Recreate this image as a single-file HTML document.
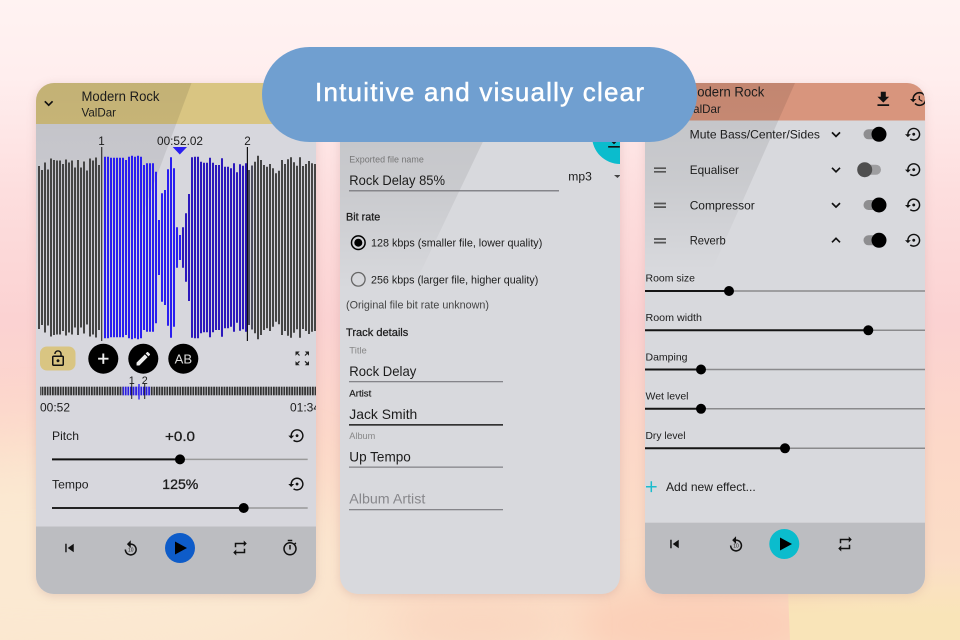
<!DOCTYPE html>
<html><head><meta charset="utf-8"><style>
html,body{margin:0;padding:0;width:960px;height:640px;overflow:hidden;background:#fbdcd6}
svg{display:block;position:absolute;left:0;top:0}
text{font-family:"Liberation Sans",sans-serif;fill:#1c1c1c}
</style></head><body>
<svg width="960" height="640" viewBox="0 0 960 640" xmlns="http://www.w3.org/2000/svg">
<defs>
<linearGradient id="bg" x1="0" y1="0" x2="0" y2="1">
<stop offset="0" stop-color="#fff3f2"/><stop offset=".12" stop-color="#ffeeee"/><stop offset=".3" stop-color="#fddede"/><stop offset=".5" stop-color="#fbd2d2"/><stop offset=".7" stop-color="#fcd8c8"/><stop offset=".85" stop-color="#fbdcc6"/><stop offset="1" stop-color="#fbe2ca"/>
</linearGradient>
<linearGradient id="fade" x1="0" y1="0" x2="0" y2="1">
<stop offset="0" stop-color="#000" stop-opacity=".1"/><stop offset=".5" stop-color="#000" stop-opacity=".07"/><stop offset="1" stop-color="#000" stop-opacity="0"/>
</linearGradient>
<linearGradient id="yel" gradientUnits="userSpaceOnUse" x1="0" y1="560" x2="0" y2="615">
<stop offset="0" stop-color="#f9e4b8" stop-opacity="0"/><stop offset="1" stop-color="#f9e4b8"/>
</linearGradient>
<filter id="sh" x="-10%" y="-10%" width="120%" height="120%"><feGaussianBlur stdDeviation="5"/></filter>
<filter id="b40" x="-50%" y="-50%" width="200%" height="200%"><feGaussianBlur stdDeviation="35"/></filter>
<filter id="b20" x="-50%" y="-50%" width="200%" height="200%"><feGaussianBlur stdDeviation="20"/></filter>
<clipPath id="c1"><rect x="36" y="83" width="280" height="511" rx="18"/></clipPath>
<clipPath id="c2"><rect x="340" y="83" width="280" height="511" rx="18"/></clipPath>
<clipPath id="c3"><rect x="645" y="83" width="280" height="511" rx="18"/></clipPath>
<symbol id="reset" viewBox="0 0 24 24"><path d="M14 12c0-1.100-.9-2-2-2s-2 .9-2 2 .9 2 2 2 2-.9 2-2zm-2-9c-4.970 0-9 4.030-9 9H0l4 4 4-4H5c0-3.870 3.130-7 7-7s7 3.130 7 7-3.130 7-7 7c-1.510 0-2.910-.49-4.060-1.300l-1.420 1.440C8.040 20.300 9.940 21 12 21c4.970 0 9-4.030 9-9s-4.030-9-9-9z"/></symbol>
<symbol id="hist" viewBox="0 0 24 24"><path d="M13 3c-4.970 0-9 4.030-9 9H1l3.890 3.890.07.14L9 12H6c0-3.870 3.130-7 7-7s7 3.130 7 7-3.130 7-7 7c-1.930 0-3.680-.79-4.940-2.060l-1.420 1.420C8.270 19.990 10.510 21 13 21c4.970 0 9-4.030 9-9s-4.030-9-9-9zm-1 5v5l4.280 2.540.72-1.210-3.500-2.080V8H12z"/></symbol>
<symbol id="dl" viewBox="0 0 24 24"><path d="M19 9h-4V3H9v6H5l7 7 7-7zM5 18v2h14v-2H5z"/></symbol>
<symbol id="prev" viewBox="0 0 24 24"><path d="M6 6h2v12H6zm3.500 6l8.500 6V6z"/></symbol>
<symbol id="rep" viewBox="0 0 24 24"><path d="M7 7h10v3l4-4-4-4v3H5v6h2V7zm10 10H7v-3l-4 4 4 4v-3h12v-6h-2v4z"/></symbol>
<symbol id="timer" viewBox="0 0 24 24"><path d="M15 1H9v2h6V1zm-4 13h2V8h-2v6zm8.030-6.610l1.420-1.420c-.43-.51-.9-.99-1.410-1.410l-1.420 1.420C16.070 4.740 14.120 4 12 4c-4.970 0-9 4.030-9 9s4.020 9 9 9 9-4.030 9-9c0-2.120-.74-4.070-1.970-5.610zM12 20c-3.870 0-7-3.130-7-7s3.130-7 7-7 7 3.130 7 7-3.130 7-7 7z"/></symbol>
<symbol id="r10" viewBox="0 0 24 24"><path d="M12 5V1L7 6l5 5V7c3.310 0 6 2.690 6 6s-2.690 6-6 6-6-2.690-6-6H4c0 4.420 3.580 8 8 8s8-3.580 8-8-3.580-8-8-8z"/></symbol>
<symbol id="edit" viewBox="0 0 24 24"><path d="M3 17.250V21h3.750L17.810 9.940l-3.750-3.750L3 17.250zM20.710 7.040c.39-.39.39-1.020 0-1.410l-2.340-2.340c-.39-.39-1.020-.39-1.410 0l-1.830 1.830 3.750 3.750 1.830-1.830z"/></symbol>
<symbol id="lock" viewBox="0 0 24 24"><path d="M12 17c1.100 0 2-.9 2-2s-.9-2-2-2-2 .9-2 2 .9 2 2 2zm6-9h-1V6c0-2.760-2.240-5-5-5S7 3.240 7 6h1.900c0-1.710 1.390-3.100 3.100-3.100 1.710 0 3.100 1.390 3.100 3.100v2H6c-1.100 0-2 .9-2 2v10c0 1.100.9 2 2 2h12c1.100 0 2-.9 2-2V10c0-1.100-.9-2-2-2zm0 12H6V10h12v10z"/></symbol>
<pattern id="mini" width="2.600" height="10" patternUnits="userSpaceOnUse"><rect width="1.800" height="10" fill="#333"/></pattern>
<pattern id="minib" width="2.600" height="10" patternUnits="userSpaceOnUse"><rect width="1.800" height="10" fill="#2a1ee0"/></pattern>
</defs>

<!-- background -->
<rect width="960" height="640" fill="url(#bg)"/>
<ellipse cx="60" cy="560" rx="300" ry="110" fill="#fbe9d2" filter="url(#b40)"/>
<ellipse cx="700" cy="625" rx="130" ry="45" fill="#fbcfb8" filter="url(#b20)"/>
<ellipse cx="480" cy="625" rx="90" ry="30" fill="#fad6c0" filter="url(#b20)"/>
<path d="M790 640 L786 540 H960 V640Z" fill="url(#yel)"/>

<!-- shadows -->
<rect x="36" y="85" width="280" height="511" rx="18" fill="#b08080" opacity=".28" filter="url(#sh)"/>
<rect x="340" y="85" width="280" height="511" rx="18" fill="#b08080" opacity=".28" filter="url(#sh)"/>
<rect x="645" y="85" width="280" height="511" rx="18" fill="#b08080" opacity=".22" filter="url(#sh)"/>

<!-- PANEL 1 -->
<g clip-path="url(#c1)">
<rect x="36" y="83" width="280" height="511" fill="#d7d7dd"/>
<rect x="36" y="83" width="280" height="41" fill="#d9c582"/>
<polygon points="36,83 191.500,83 118,280 36,280" fill="url(#fade)"/>
<rect x="36" y="526.500" width="280" height="68" fill="#bcbdc1"/>
<g transform="translate(.3 0)">
<path d="M38.700 247.500v-81.500v163M41.700 247.500v-77.500v155M44.700 247.500v-85v170M47.700 247.500v-78v156M50.700 247.500v-89v178M53.700 247.500v-87.500v175M56.700 247.500v-87v174M59.700 247.500v-87v174M62.700 247.500v-83.500v167M65.700 247.500v-88v176M68.700 247.500v-85v170M71.700 247.500v-87v174M74.700 247.500v-80v160M77.700 247.500v-87.500v175M80.700 247.500v-80v160M83.700 247.500v-86v172M86.700 247.500v-77v154M89.700 247.500v-89v178M92.700 247.500v-87v174M95.700 247.500v-90v180M98.700 247.500v-82.500v165M254.700 247.500v-85.800v171.600M257.700 247.500v-91.800v183.600M260.700 247.500v-87.500v175M263.700 247.500v-82.500v165M266.700 247.500v-80.800v161.600M269.700 247.500v-83.500v167M272.700 247.500v-79.200v158.400M275.700 247.500v-74.200v148.400M278.700 247.500v-76.800v153.600M281.700 247.500v-87.500v175M284.700 247.500v-83.500v167M287.700 247.500v-88.200v176.400M290.700 247.500v-90.200v180.400M293.700 247.500v-85.200v170.400M296.700 247.500v-81.800v163.600M299.700 247.500v-90.200v180.400M302.700 247.500v-81.500v163M305.700 247.500v-83.500v167M308.700 247.500v-86.500v173M311.700 247.500v-84.200v168.400M314.700 247.500v-83.500v167" stroke="#454545" stroke-width="2" fill="none"/>
<path d="M104.700 247.500v-90.800v181.600M107.700 247.500v-90.800v181.600M110.700 247.500v-89.800v179.600M113.700 247.500v-89.800v179.600M116.700 247.500v-89.800v179.600M119.700 247.500v-89.800v179.600M122.700 247.500v-89.800v179.600M125.700 247.500v-87.500v175M128.700 247.500v-90.800v181.600M131.700 247.500v-91.800v183.600M134.700 247.500v-90.800v181.600M137.700 247.500v-91.800v183.600M140.700 247.500v-90.800v181.600M143.700 247.500v-82.500v165M146.700 247.500v-84.200v168.400M149.700 247.500v-84.200v168.400M152.700 247.500v-84.200v168.400M155.700 247.500v-75.800v151.600M158.700 247.500v-27.500v55M161.700 247.500v-54.200v108.400M164.700 247.500v-57.500v115M167.700 247.500v-78.200v156.400M170.700 247.500v-90.200v180.400M173.700 247.500v-79.200v158.400M176.700 247.500v-20.200v40.400M179.700 247.500v-12.500v25" stroke="#2a1ef0" stroke-width="2" fill="none"/>
<path d="M182.700 247.500v-20.200v40.400M185.700 247.500v-34.200v68.400M188.700 247.500v-53.500v107M191.700 247.500v-90.200v180.400M194.700 247.500v-90.800v181.600M197.700 247.500v-90.800v181.600M200.700 247.500v-85.800v171.600M203.700 247.500v-84.800v169.600M206.700 247.500v-84.800v169.600M209.700 247.500v-89.800v179.600M212.700 247.500v-84.800v169.600M215.700 247.500v-82.500v165M218.700 247.500v-82.500v165M221.700 247.500v-89.200v178.400M224.700 247.500v-80.800v161.600M227.700 247.500v-80.800v161.600M230.700 247.500v-79.200v158.400M233.700 247.500v-84.200v168.400M236.700 247.500v-75.200v150.400M239.700 247.500v-83.200v166.400M242.700 247.500v-81.800v163.600M245.700 247.500v-84.200v168.400" stroke="#2c18bc" stroke-width="2" fill="none"/>
<path d="M248.700 247.500v-77.500v155M251.700 247.500v-82v164" stroke="#4a4a5c" stroke-width="2" fill="none"/>
</g>
<path d="M101.700 147v194" stroke="#333" stroke-width="1.200"/>
<path d="M247.400 147v194" stroke="#111" stroke-width="1.200"/>
<polygon points="172.700,147 187,147 179.800,154.500" fill="#2a1ef0"/>
<text x="98.200" y="145" font-size="12" textLength="6.500" lengthAdjust="spacingAndGlyphs">1</text>
<text x="157" y="145" font-size="12" textLength="46" lengthAdjust="spacingAndGlyphs">00:52.02</text>
<text x="244.300" y="145" font-size="12" textLength="6.500" lengthAdjust="spacingAndGlyphs">2</text>
<rect x="40" y="346.500" width="35.500" height="24" rx="7" fill="#d9c582"/>
<use href="#lock" x="49" y="349.500" width="18" height="18" fill="#111"/>
<circle cx="103.300" cy="358.700" r="15" fill="#000"/>
<circle cx="143.300" cy="358.700" r="15" fill="#000"/>
<circle cx="183.300" cy="358.700" r="15" fill="#000"/>
<path d="M103.300 353.500v10.400M98.100 358.700h10.400" stroke="#eee" stroke-width="1.900"/>
<use href="#edit" x="134.300" y="349.700" width="18" height="18" fill="#eee"/>
<text x="174.700" y="363.500" font-size="12.500" style="fill:#ddd" textLength="17.500" lengthAdjust="spacingAndGlyphs">AB</text>
<path d="M295.500 351.500h4.200l-4.200 4.200zM309 351.500h-4.200l4.200 4.200zM295.500 365.300h4.200l-4.200-4.200zM309 365.300h-4.200l4.200-4.200z" fill="#222"/>
<path d="M296 352l3.500 3.500M308.500 352l-3.500 3.500M296 364.800l3.500-3.500M308.500 364.800l-3.500-3.500" stroke="#222" stroke-width="1.200"/>
<rect x="40" y="386.700" width="276" height="8.600" fill="url(#mini)"/>
<rect x="122.700" y="386.700" width="28" height="8.600" fill="#d7d7dd"/>
<rect x="122.700" y="386.700" width="28" height="8.600" fill="url(#minib)"/>
<path d="M131.700 383v16M144.700 383v16" stroke="#222" stroke-width="1"/>
<path d="M139 384v15.500" stroke="#3a2cf0" stroke-width="1.500"/>
<text x="128.800" y="384" font-size="11" textLength="6" lengthAdjust="spacingAndGlyphs">1</text>
<text x="141.800" y="384" font-size="11" textLength="6" lengthAdjust="spacingAndGlyphs">2</text>
<text x="40" y="411.700" font-size="12" textLength="30" lengthAdjust="spacingAndGlyphs">00:52</text>
<text x="290" y="411.700" font-size="12" textLength="30" lengthAdjust="spacingAndGlyphs">01:34</text>
<text x="52" y="440" font-size="12" textLength="27" lengthAdjust="spacingAndGlyphs">Pitch</text>
<text x="165" y="441" font-size="14" stroke="#1c1c1c" stroke-width=".3" textLength="30" lengthAdjust="spacingAndGlyphs">+0.0</text>
<use href="#reset" x="288.300" y="426.900" width="17.500" height="17.500" fill="#111"/>
<path d="M52 459.400H180" stroke="#111" stroke-width="2"/>
<path d="M180 459.400H307.700" stroke="#999" stroke-width="1.500"/>
<circle cx="180" cy="459.400" r="5" fill="#000"/>
<text x="52" y="488.500" font-size="12" textLength="36.500" lengthAdjust="spacingAndGlyphs">Tempo</text>
<text x="162.300" y="489" font-size="14" stroke="#1c1c1c" stroke-width=".3" textLength="36" lengthAdjust="spacingAndGlyphs">125%</text>
<use href="#reset" x="288.300" y="475.300" width="17.500" height="17.500" fill="#111"/>
<path d="M52 508H243.700" stroke="#222" stroke-width="2"/>
<path d="M243.700 508H307.700" stroke="#999" stroke-width="1.500"/>
<circle cx="243.700" cy="508" r="5" fill="#000"/>
<use href="#prev" x="61" y="539.500" width="17" height="17" fill="#111"/>
<use href="#r10" x="121.500" y="539.500" width="18.500" height="18.500" fill="#111"/>
<text x="128" y="551.500" font-size="5" textLength="5.500" lengthAdjust="spacingAndGlyphs">10</text>
<circle cx="180" cy="548" r="15" fill="#0e5cc9"/>
<polygon points="175,541.500 175,554.500 187,548" fill="#000"/>
<use href="#rep" x="231" y="539" width="18" height="18" fill="#111"/>
<use href="#timer" x="281" y="539" width="18" height="18" fill="#111"/>
</g>
<text x="81.500" y="101" font-size="14" textLength="78" lengthAdjust="spacingAndGlyphs">Modern Rock</text>
<text x="81.500" y="116.700" font-size="12" textLength="34.500" lengthAdjust="spacingAndGlyphs">ValDar</text>
<path d="M44.800 101.300l3.900 3.900 3.900-3.900" stroke="#111" stroke-width="1.700" fill="none"/>

<!-- PANEL 2 -->
<g clip-path="url(#c2)">
<rect x="340" y="83" width="280" height="511" fill="#d8d9dd"/>
<polygon points="340,83 511,83 412,290 340,290" fill="url(#fade)"/>
<circle cx="620" cy="136" r="28" fill="#0bbccd"/>
<use href="#dl" x="604" y="131" width="20" height="20" fill="#111"/>
<path d="M614 175h6.500l-3 3z" fill="#444"/>
<text x="349.300" y="162.700" font-size="9.500" style="fill:#777" textLength="74.500" lengthAdjust="spacingAndGlyphs">Exported file name</text>
<text x="349.300" y="185" font-size="14" textLength="95.700" lengthAdjust="spacingAndGlyphs">Rock Delay 85%</text>
<rect x="349" y="190" width="210" height="1.500" fill="#85858a"/>
<text x="568.300" y="180.700" font-size="12" textLength="23.500" lengthAdjust="spacingAndGlyphs">mp3</text>
<text x="346" y="220.700" font-size="11" stroke="#1c1c1c" stroke-width=".25" textLength="34.300" lengthAdjust="spacingAndGlyphs">Bit rate</text>
<circle cx="358.300" cy="242.700" r="6.800" fill="none" stroke="#000" stroke-width="1.500"/>
<circle cx="358.300" cy="242.700" r="4" fill="#000"/>
<text x="371" y="246.700" font-size="11" textLength="171.300" lengthAdjust="spacingAndGlyphs">128 kbps (smaller file, lower quality)</text>
<circle cx="358.300" cy="279.300" r="6.800" fill="none" stroke="#666" stroke-width="1.300"/>
<text x="371" y="283.300" font-size="11" textLength="167.300" lengthAdjust="spacingAndGlyphs">256 kbps (larger file, higher quality)</text>
<text x="346" y="308.700" font-size="11" style="fill:#444" textLength="143" lengthAdjust="spacingAndGlyphs">(Original file bit rate unknown)</text>
<text x="346" y="336" font-size="11" stroke="#1c1c1c" stroke-width=".25" textLength="62.300" lengthAdjust="spacingAndGlyphs">Track details</text>
<text x="349.300" y="353.500" font-size="9" style="fill:#888" textLength="17.500" lengthAdjust="spacingAndGlyphs">Title</text>
<text x="349.300" y="376" font-size="14" textLength="67" lengthAdjust="spacingAndGlyphs">Rock Delay</text>
<rect x="349" y="381" width="154" height="1.300" fill="#85858a"/>
<text x="349.300" y="396.500" font-size="9" stroke="#1c1c1c" stroke-width=".15" textLength="22" lengthAdjust="spacingAndGlyphs">Artist</text>
<text x="349.300" y="418.800" font-size="14" textLength="68" lengthAdjust="spacingAndGlyphs">Jack Smith</text>
<rect x="349" y="424" width="154" height="1.700" fill="#333"/>
<text x="349.300" y="439.200" font-size="9" style="fill:#888" textLength="26" lengthAdjust="spacingAndGlyphs">Album</text>
<text x="349.300" y="461.500" font-size="14" textLength="61.500" lengthAdjust="spacingAndGlyphs">Up Tempo</text>
<rect x="349" y="466.500" width="154" height="1.300" fill="#85858a"/>
<text x="349.300" y="503.500" font-size="14" style="fill:#87878b" textLength="76" lengthAdjust="spacingAndGlyphs">Album Artist</text>
<rect x="349" y="509" width="154" height="1.300" fill="#85858a"/>
</g>

<!-- PANEL 3 -->
<g clip-path="url(#c3)">
<rect x="645" y="83" width="280" height="511" fill="#d8d9dd"/>
<rect x="645" y="83" width="280" height="37.500" fill="#d8957d"/>
<polygon points="645,83 795,83 712,270 645,270" fill="url(#fade)"/>
<rect x="645" y="522.700" width="280" height="72" fill="#bcbdc1"/>
<use href="#dl" x="873.300" y="89.300" width="20" height="20" fill="#111"/>
<use href="#hist" x="909.200" y="89.500" width="19" height="19" fill="#111"/>
<text x="689.700" y="138.500" font-size="12" textLength="130.300" lengthAdjust="spacingAndGlyphs">Mute Bass/Center/Sides</text>
<text x="689.700" y="174" font-size="12" textLength="49.300" lengthAdjust="spacingAndGlyphs">Equaliser</text>
<text x="689.700" y="209.300" font-size="12" textLength="65" lengthAdjust="spacingAndGlyphs">Compressor</text>
<text x="689.700" y="244.700" font-size="12" textLength="36" lengthAdjust="spacingAndGlyphs">Reverb</text>
<g stroke="#111" stroke-width="1.700" fill="none">
<path d="M832 132.400l4 4 4-4M832 167.800l4 4 4-4M832 203.100l4 4 4-4M832 242.300l4-4 4 4"/>
</g>
<rect x="863.500" y="129.300" width="21" height="10" rx="5" fill="#8e8e90"/>
<circle cx="879" cy="134.300" r="7.500" fill="#000"/>
<rect x="859" y="164.700" width="22" height="10" rx="5" fill="#9e9ea0"/>
<circle cx="864.700" cy="169.700" r="7.500" fill="#4f4f4f"/>
<rect x="863.500" y="200" width="21" height="10" rx="5" fill="#8e8e90"/>
<circle cx="879" cy="205" r="7.500" fill="#000"/>
<rect x="863.500" y="235.300" width="21" height="10" rx="5" fill="#8e8e90"/>
<circle cx="879" cy="240.300" r="7.500" fill="#000"/>
<use href="#reset" x="905" y="125.500" width="17.500" height="17.500" fill="#111"/>
<use href="#reset" x="905" y="160.900" width="17.500" height="17.500" fill="#111"/>
<use href="#reset" x="905" y="196.200" width="17.500" height="17.500" fill="#111"/>
<use href="#reset" x="905" y="231.500" width="17.500" height="17.500" fill="#111"/>
<path d="M654 168.200h12M654 171.800h12M654 203.500h12M654 207.100h12M654 239h12M654 242.600h12" stroke="#555" stroke-width="1.700"/>
<text x="645.500" y="281.700" font-size="10.500" textLength="49.500" lengthAdjust="spacingAndGlyphs">Room size</text>
<text x="645.500" y="321" font-size="10.500" textLength="56.500" lengthAdjust="spacingAndGlyphs">Room width</text>
<text x="645.500" y="360.300" font-size="10.500" textLength="42" lengthAdjust="spacingAndGlyphs">Damping</text>
<text x="645.500" y="399.500" font-size="10.500" textLength="43" lengthAdjust="spacingAndGlyphs">Wet level</text>
<text x="645.500" y="438.800" font-size="10.500" textLength="40" lengthAdjust="spacingAndGlyphs">Dry level</text>
<g stroke="#8a8a8c" stroke-width="1.500">
<path d="M729 291H925M868.300 330.300H925M701 369.500H925M701 408.800H925M785 448.300H925"/>
</g>
<g stroke="#151515" stroke-width="2">
<path d="M645 291H729M645 330.300H868.300M645 369.500H701M645 408.800H701M645 448.300H785"/>
</g>
<circle cx="729" cy="291" r="5" fill="#000"/>
<circle cx="868.300" cy="330.300" r="5" fill="#000"/>
<circle cx="701" cy="369.500" r="5" fill="#000"/>
<circle cx="701" cy="408.800" r="5" fill="#000"/>
<circle cx="785" cy="448.300" r="5" fill="#000"/>
<path d="M651.300 481.300v10.800M646 486.700h10.600" stroke="#1bbccd" stroke-width="1.500"/>
<text x="666" y="491" font-size="12" textLength="89.700" lengthAdjust="spacingAndGlyphs">Add new effect...</text>
<use href="#prev" x="666" y="535.500" width="17" height="17" fill="#111"/>
<use href="#r10" x="726.800" y="535.500" width="18.500" height="18.500" fill="#111"/>
<text x="733.300" y="547.500" font-size="5" textLength="5.500" lengthAdjust="spacingAndGlyphs">10</text>
<circle cx="784.300" cy="544" r="15" fill="#0bbccd"/>
<polygon points="780,537.500 780,550.500 792,544" fill="#000"/>
<use href="#rep" x="836" y="535" width="18" height="18" fill="#111"/>
<text x="686.300" y="96.700" font-size="14" textLength="78" lengthAdjust="spacingAndGlyphs">Modern Rock</text>
<text x="686.300" y="112.800" font-size="12" textLength="34.500" lengthAdjust="spacingAndGlyphs">ValDar</text>
</g>

<!-- PILL -->
<rect x="262" y="47" width="435" height="95" rx="47.500" fill="#709fd0"/>
<text x="315" y="101" font-size="26" style="fill:#fff" stroke="#fff" stroke-width=".45" textLength="329" lengthAdjust="spacing">Intuitive and visually clear</text>
</svg>
</body></html>
